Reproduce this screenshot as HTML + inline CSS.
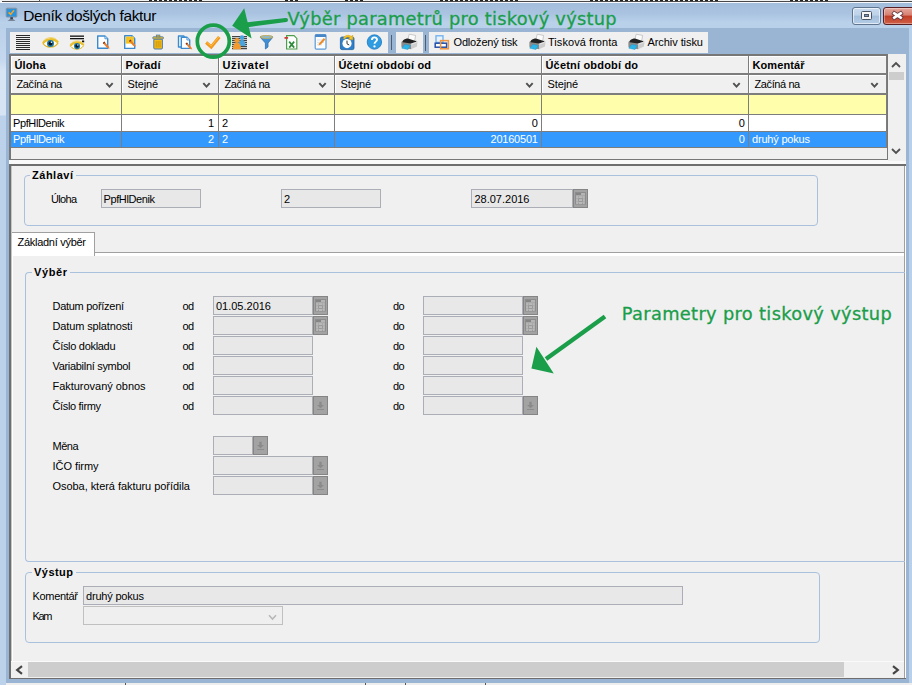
<!DOCTYPE html>
<html lang="cs">
<head>
<meta charset="utf-8">
<title>Deník došlých faktur</title>
<style>
*{box-sizing:border-box;margin:0;padding:0}
html,body{width:912px;height:685px;overflow:hidden;background:#b9d1ea}
body{position:relative;font-family:"Liberation Sans","DejaVu Sans",sans-serif;font-size:11px;color:#000}
#win,#win div,#win svg{position:absolute}
#win{left:0;top:0;width:912px;height:685px;overflow:hidden}
.t{white-space:nowrap;line-height:13px;height:13px;letter-spacing:-0.22px}
.b{font-weight:bold;letter-spacing:0.22px}
.w{color:#fff}
.fld{background:#e8e8e8;border:1px solid #abaeb7;height:19px}
.btn{background:#a3a3a3;border:1px solid #858585;width:15px;height:19px}
.grp{border:1px solid #a9c1dc;border-radius:4px}
.gl{background:#f0f0f0;padding:0 2px;font-weight:bold;letter-spacing:0.5px;white-space:nowrap;line-height:13px;height:13px}
.grn{-webkit-text-stroke:0.3px #1a9e4a;font-family:"DejaVu Sans","Liberation Sans",sans-serif;color:#1a9e4a;font-size:17.8px;line-height:22px;letter-spacing:0.18px;white-space:nowrap}
.hc{background:#f0f0f0;border-left:1px solid #fff;border-top:1px solid #fff}
.vl{background:#7d7d7d;width:1px}
.hl{background:#7d7d7d;height:1px}
</style>
</head>
<body>
<div id="win">

<div style="left:0;top:0;width:912px;height:3px;background:#f2f2f2"></div>
<div style="left:149px;top:0;width:55px;height:1px;background:repeating-linear-gradient(90deg,#222 0 3px,#f2f2f2 3px 5px)"></div>
<div style="left:285px;top:0;width:15px;height:1px;background:repeating-linear-gradient(90deg,#222 0 3px,#f2f2f2 3px 5px)"></div>
<div style="left:345px;top:0;width:20px;height:1px;background:repeating-linear-gradient(90deg,#222 0 3px,#f2f2f2 3px 5px)"></div>
<div style="left:440px;top:0;width:80px;height:1px;background:repeating-linear-gradient(90deg,#222 0 3px,#f2f2f2 3px 5px)"></div>
<div style="left:590px;top:0;width:130px;height:1px;background:repeating-linear-gradient(90deg,#222 0 3px,#f2f2f2 3px 5px)"></div>
<div style="left:790px;top:0;width:40px;height:1px;background:repeating-linear-gradient(90deg,#222 0 3px,#f2f2f2 3px 5px)"></div>
<div style="left:2px;top:1.3px;width:910px;height:1px;background:#4a4a4a"></div>
<div style="left:1px;top:2.3px;width:911px;height:1px;background:#f6f8fb"></div>
<div style="left:39px;top:0;width:1px;height:2px;background:#555"></div>
<div style="left:0;top:3px;width:912px;height:26px;background:linear-gradient(#a3bedc 0,#a9c3e0 40%,#bad1ea 75%,#b9d0ea)"></div>
<div style="left:0;top:29px;width:6px;height:656px;background:linear-gradient(#bcd2ea 0,#c4d7ee 30px,#d6e4f4 42px,#d6e4f4 86px,#bcd2ea 87px,#bcd2ea)"></div>
<div style="left:909px;top:29px;width:3px;height:656px;background:#b9d0ea"></div>
<div class="t" style="left:23.3px;top:7.4px;font-size:15.5px;line-height:18px;height:18px;letter-spacing:-0.39px">Deník došlých faktur</div>
<svg style="left:5px;top:7px" width="14" height="16" viewBox="0 0 14 16"><rect x="1.2" y="1.2" width="10.6" height="8.8" rx="0.8" fill="#2a93dd" stroke="#8a93a0" stroke-width="1"/><path d="M3.6 5.4 L5.6 7.4 L9 3.2" fill="none" stroke="#f6a623" stroke-width="1.5"/><rect x="5.3" y="10.2" width="2.6" height="2" fill="#3a3f4a"/><path d="M2.6 13.6 C4 12 9 12 10.6 13.6 Z" fill="#3a3f4a"/></svg>
<div style="left:852px;top:7px;width:29px;height:18px;border:1px solid #5f7590;border-radius:3px;background:linear-gradient(#c9dbee,#bdd2e9 45%,#a3bfdc 50%,#b4cce6);box-shadow:inset 0 0 0 1px rgba(255,255,255,.6)"></div>
<div style="left:861px;top:11px;width:11px;height:9px;border:1px solid #4a5568;border-radius:1.5px;background:#f4f4f4"></div>
<div style="left:864px;top:14px;width:5px;height:3px;border:1px solid #4a5568;background:#7f97b8"></div>
<div style="left:883px;top:7px;width:40px;height:18px;border:1px solid #5a1f22;border-radius:3px;background:linear-gradient(#e5aa9f,#d67e6f 45%,#c03c26 50%,#cf6048);box-shadow:inset 0 0 0 1px rgba(255,255,255,.35)"></div>
<svg style="left:890px;top:9px" width="15" height="13" viewBox="0 0 15 13"><path d="M2.6 3.2 L12.4 9.8 M12.4 3.2 L2.6 9.8" stroke="#5a3038" stroke-width="4.4"/><path d="M3.2 3.6 L11.8 9.4 M11.8 3.6 L3.2 9.4" stroke="#fff" stroke-width="2.7"/></svg>
<div style="left:6px;top:28px;width:903px;height:655px;background:#9ab5d3"></div>
<div style="left:6px;top:683px;width:906px;height:2px;background:#eeeeee"></div>
<div style="left:125px;top:683px;width:1px;height:2px;background:#555"></div>
<div style="left:365px;top:683px;width:1px;height:2px;background:#555"></div>
<div style="left:405px;top:683px;width:1px;height:2px;background:#555"></div>
<div style="left:485px;top:683px;width:1px;height:2px;background:#555"></div>
<div style="left:10px;top:32px;width:378px;height:21px;background:#f0f0f0"></div>
<div style="left:396px;top:32px;width:27px;height:21px;background:#f0f0f0"></div>
<div style="left:429px;top:32px;width:279px;height:21px;background:#f0f0f0"></div>
<div style="left:390.6px;top:35px;width:1.2px;height:15px;background:#4f5d70"></div>
<div style="left:425.2px;top:34.5px;width:1.2px;height:16px;background:#4f5d70"></div>
<svg style="left:16px;top:35px" width="15" height="16" viewBox="0 0 15 16"><rect x="0" y="0" width="14" height="1" fill="#2b2b2b"/><rect x="0" y="2" width="14" height="1" fill="#2b2b2b"/><rect x="0" y="4" width="14" height="1" fill="#2b2b2b"/><rect x="0" y="6" width="14" height="1" fill="#2b2b2b"/><rect x="0" y="8" width="14" height="1" fill="#2b2b2b"/><rect x="0" y="10" width="14" height="1" fill="#2b2b2b"/><rect x="0" y="12" width="14" height="1" fill="#2b2b2b"/><rect x="0" y="14" width="14" height="1" fill="#2b2b2b"/></svg>
<svg style="left:42px;top:36px" width="17" height="13" viewBox="0 0 17 13"><g transform="translate(0.5,1.5)"><path d="M0.6 6.2 C3.2 2 11.8 1 15.4 5.6 C12.4 10.6 4.2 11 0.6 6.2 Z" fill="#fdfbf0" stroke="#e2b21c" stroke-width="1.1"/><path d="M0.4 5.6 C3 1 11.6 0 15.6 4.8" fill="none" stroke="#eabf2c" stroke-width="2.1"/><path d="M1 3.4 C4 -0.6 10.6 -1 14 2" fill="none" stroke="#efd065" stroke-width="0.9"/><circle cx="8" cy="6" r="3.5" fill="#1f78a4"/><circle cx="8" cy="5.9" r="2" fill="#0a1420"/><circle cx="8.9" cy="4.8" r="0.75" fill="#fff"/></g></svg>
<svg style="left:69px;top:34px" width="17" height="17" viewBox="0 0 17 17"><rect x="1" y="1.5" width="14" height="1.3" fill="#111"/><rect x="1" y="4" width="14" height="1.3" fill="#111"/><rect x="13" y="6.5" width="2.2" height="1.8" fill="#111"/><g transform="translate(1,6.8) scale(0.88)"><path d="M0.6 6.2 C3.2 2 11.8 1 15.4 5.6 C12.4 10.6 4.2 11 0.6 6.2 Z" fill="#fdfbf0" stroke="#e2b21c" stroke-width="1.1"/><path d="M0.4 5.6 C3 1 11.6 0 15.6 4.8" fill="none" stroke="#eabf2c" stroke-width="2.1"/><path d="M1 3.4 C4 -0.6 10.6 -1 14 2" fill="none" stroke="#efd065" stroke-width="0.9"/><circle cx="8" cy="6" r="3.5" fill="#1f78a4"/><circle cx="8" cy="5.9" r="2" fill="#0a1420"/><circle cx="8.9" cy="4.8" r="0.75" fill="#fff"/></g></svg>
<svg style="left:96px;top:34px" width="16" height="17" viewBox="0 0 16 17"><path d="M1.7 2 h7.2 l2.8 2.8 v9.5 h-10 z" fill="#fff" stroke="#3b8ad0" stroke-width="1.4" stroke-linejoin="round"/><path d="M8.899999999999999 2 v2.8 h2.8" fill="#cfe3f6" stroke="#3b8ad0" stroke-width="0.8"/><path d="M8.3 7.5 l4.4 5 l0.9 2.2 l-2.4 -0.8 l-4.4 -5 z" fill="#ec7d2a"/><path d="M8.3 7.5 l0.9 1 l-1.5 1.4 l-0.9 -1 z" fill="#7a3b1e"/></svg>
<svg style="left:123px;top:34px" width="16" height="17" viewBox="0 0 16 17"><path d="M1.7 1.8 h7.2 l2.8 2.8 v9.8 h-10 z" fill="#fff" stroke="#3b8ad0" stroke-width="1.4" stroke-linejoin="round"/><path d="M8.899999999999999 1.8 v2.8 h2.8" fill="#cfe3f6" stroke="#3b8ad0" stroke-width="0.8"/><rect x="2.6" y="2.6" width="8.2" height="7" fill="#f6c324"/><path d="M7.5 5.5 l4.4 5 l0.9 2.2 l-2.4 -0.8 l-4.4 -5 z" fill="#ec7d2a"/><path d="M7.5 5.5 l0.9 1 l-1.5 1.4 l-0.9 -1 z" fill="#7a3b1e"/></svg>
<svg style="left:152px;top:34px" width="13" height="17" viewBox="0 0 13 17"><rect x="1.8" y="5" width="8.6" height="10" rx="1" fill="#f3bb14" stroke="#4b7cb0" stroke-width="1"/><rect x="0.8" y="2.8" width="10.6" height="2.2" rx="0.8" fill="#f3bb14" stroke="#4b7cb0" stroke-width="0.9"/><rect x="4.3" y="1" width="3.6" height="2" fill="#e0a90f" stroke="#4b7cb0" stroke-width="0.7"/><path d="M4.2 7 v6.4 M6.1 7 v6.4 M8 7 v6.4" stroke="#c99208" stroke-width="0.9"/></svg>
<svg style="left:177px;top:34px" width="17" height="17" viewBox="0 0 17 17"><path d="M1.5 2 h5.2 l2.8 2.8 v8.2 h-8 z" fill="#fff" stroke="#3b8ad0" stroke-width="1.4" stroke-linejoin="round"/><path d="M6.7 2 v2.8 h2.8" fill="#cfe3f6" stroke="#3b8ad0" stroke-width="0.8"/><path d="M4.3 3.2 h5.6000000000000005 l2.8 2.8 v8.399999999999999 h-8.4 z" fill="#fff" stroke="#3b8ad0" stroke-width="1.4" stroke-linejoin="round"/><path d="M9.899999999999999 3.2 v2.8 h2.8" fill="#cfe3f6" stroke="#3b8ad0" stroke-width="0.8"/><path d="M10 8.4 l4.4 5 l0.9 2.2 l-2.4 -0.8 l-4.4 -5 z" fill="#ec7d2a"/><path d="M10 8.4 l0.9 1 l-1.5 1.4 l-0.9 -1 z" fill="#7a3b1e"/></svg>
<svg style="left:204px;top:34px" width="18" height="16" viewBox="0 0 18 16"><path d="M2.2 8.6 L7.2 13 L15.3 3" fill="none" stroke="#f2981c" stroke-width="3.3" stroke-linejoin="miter"/><path d="M2.6 8.2 L7.2 12.2 L14.8 3" fill="none" stroke="#fbbf45" stroke-width="1" /></svg>
<svg style="left:231px;top:34px" width="17" height="17" viewBox="0 0 17 17"><rect x="1" y="2.2" width="15" height="1" fill="#1a1a1a"/><rect x="1" y="4.2" width="15" height="1" fill="#1a1a1a"/><rect x="1" y="6.2" width="15" height="1" fill="#1a1a1a"/><rect x="1" y="8.2" width="15" height="1" fill="#1a1a1a"/><rect x="1" y="10.2" width="15" height="1" fill="#1a1a1a"/><rect x="1" y="12.2" width="15" height="1" fill="#1a1a1a"/><rect x="1" y="14.2" width="15" height="1" fill="#1a1a1a"/><circle cx="11" cy="3.6" r="2.4" fill="#49a3dc"/><path d="M7.6 12 C7.6 7 9 6 11 6 C13 6 14.4 7 14.4 12 Z" fill="#49a3dc"/><circle cx="6" cy="6.6" r="2.5" fill="#f39a2e"/><path d="M2 15.2 C2 10 3.6 9 6 9 C8.4 9 10 10 10 15.2 Z" fill="#f39a2e"/></svg>
<svg style="left:259px;top:34px" width="16" height="17" viewBox="0 0 16 17"><path d="M1 3 C1 1.5 14 1.5 14 3 L9 9 L9 13 L6.4 15 L6.4 9 Z" fill="#3f8fd6" stroke="#2f6fb0" stroke-width="0.8"/><ellipse cx="7.5" cy="3" rx="6.3" ry="1.3" fill="#7db9ea" stroke="#d9b23a" stroke-width="0.9"/></svg>
<svg style="left:284px;top:34px" width="15" height="17" viewBox="0 0 15 17"><path d="M2.6 1.6 h7.4 l2.8 2.8 v10.6 h-10.2 z" fill="#fff" stroke="#4f9d4b" stroke-width="1.2"/><path d="M5.2 7.6 l5 6 M10.2 7.6 l-5 6" stroke="#2f8a3a" stroke-width="1.7"/><rect x="0.5" y="3" width="3.6" height="1.8" fill="#d23b3b"/></svg>
<svg style="left:314px;top:33px" width="14" height="18" viewBox="0 0 14 18"><rect x="1.2" y="1.6" width="10.8" height="14.6" rx="1.2" fill="#fdfdfd" stroke="#5a9ad8" stroke-width="1.2"/><rect x="1.2" y="1.6" width="10.8" height="2.4" fill="#4a86c5"/><path d="M3 7 h7 M3 9.4 h7 M3 11.8 h5" stroke="#cfd8e4" stroke-width="0.8"/><path d="M9.8 5 l1.6 1.4 l-4.6 5.2 l-2.2 0.8 l0.6 -2.2 z" fill="#f08a24"/></svg>
<svg style="left:339px;top:33px" width="17" height="18" viewBox="0 0 17 18"><rect x="1.4" y="4" width="13.6" height="12.6" rx="1.6" fill="#2e7fc9" stroke="#1f5fa0" stroke-width="0.8"/><circle cx="8" cy="10.6" r="4.6" fill="#fff"/><path d="M8 7.6 v3.2 l2.2 1.2" stroke="#333" stroke-width="1" fill="none"/><path d="M4.2 5.4 C6 1.8 10 1.4 12.4 3.6 L13.6 2 L14 6.8 L9.4 6.2 L11 4.8 C9 3.4 6.8 4 5.8 6 Z" fill="#f7c325" stroke="#d79a10" stroke-width="0.5"/></svg>
<svg style="left:366px;top:34px" width="17" height="17" viewBox="0 0 17 17"><circle cx="8.4" cy="8" r="7.2" fill="#2f9be0"/><circle cx="8.4" cy="8" r="7.2" fill="none" stroke="#1c77c0" stroke-width="0.8"/><path d="M5.9 6.1 C5.9 2.6 11 2.6 11 5.7 C11 7.6 8.5 7.7 8.5 9.8" fill="none" stroke="#fff" stroke-width="1.9"/><circle cx="8.5" cy="12.4" r="1.15" fill="#fff"/></svg>
<svg style="left:400px;top:33px" width="18" height="18" viewBox="0 0 18 18"><path d="M9.2 1.2 L15.6 2.4 L14.6 8.4 L7.8 6.8 Z" fill="#fbfbfb" stroke="#b5b5b5" stroke-width="0.7"/><path d="M10.6 9 L16.4 7.6 C17.2 7.6 17.4 8.4 17.4 9.2 L17 13.4 L11 16.2 Z" fill="#cdcdcd"/><path d="M1.4 9.8 C1.4 8.8 2 8 3 7.8 L10.6 8.8 L11.2 16.2 L2.2 14.8 C1.6 14.6 1.4 14 1.4 13.4 Z" fill="#8b8b8b"/><path d="M3 7.6 C4.4 6.2 6.4 5.6 8 5.6 L14.8 7.8 C15.6 8 16 8.2 16.4 8.8 L10.8 10.4 L2.6 9.2 Z" fill="#222"/><path d="M4.6 11.4 L10.4 12.4 L8 16.6 L1.8 15.2 Z" fill="#2bb5e8" stroke="#1b8fc0" stroke-width="0.4"/><path d="M11.6 11 L16.6 9.4" stroke="#eee" stroke-width="0.8"/></svg>
<svg style="left:528px;top:33px" width="18" height="18" viewBox="0 0 18 18"><path d="M9.2 1.2 L15.6 2.4 L14.6 8.4 L7.8 6.8 Z" fill="#fbfbfb" stroke="#b5b5b5" stroke-width="0.7"/><path d="M10.6 9 L16.4 7.6 C17.2 7.6 17.4 8.4 17.4 9.2 L17 13.4 L11 16.2 Z" fill="#cdcdcd"/><path d="M1.4 9.8 C1.4 8.8 2 8 3 7.8 L10.6 8.8 L11.2 16.2 L2.2 14.8 C1.6 14.6 1.4 14 1.4 13.4 Z" fill="#8b8b8b"/><path d="M3 7.6 C4.4 6.2 6.4 5.6 8 5.6 L14.8 7.8 C15.6 8 16 8.2 16.4 8.8 L10.8 10.4 L2.6 9.2 Z" fill="#222"/><path d="M4.6 11.4 L10.4 12.4 L8 16.6 L1.8 15.2 Z" fill="#2bb5e8" stroke="#1b8fc0" stroke-width="0.4"/><path d="M11.6 11 L16.6 9.4" stroke="#eee" stroke-width="0.8"/></svg>
<svg style="left:627px;top:33px" width="18" height="18" viewBox="0 0 18 18"><path d="M9.2 1.2 L15.6 2.4 L14.6 8.4 L7.8 6.8 Z" fill="#fbfbfb" stroke="#b5b5b5" stroke-width="0.7"/><path d="M10.6 9 L16.4 7.6 C17.2 7.6 17.4 8.4 17.4 9.2 L17 13.4 L11 16.2 Z" fill="#cdcdcd"/><path d="M1.4 9.8 C1.4 8.8 2 8 3 7.8 L10.6 8.8 L11.2 16.2 L2.2 14.8 C1.6 14.6 1.4 14 1.4 13.4 Z" fill="#8b8b8b"/><path d="M3 7.6 C4.4 6.2 6.4 5.6 8 5.6 L14.8 7.8 C15.6 8 16 8.2 16.4 8.8 L10.8 10.4 L2.6 9.2 Z" fill="#222"/><path d="M4.6 11.4 L10.4 12.4 L8 16.6 L1.8 15.2 Z" fill="#2bb5e8" stroke="#1b8fc0" stroke-width="0.4"/><path d="M11.6 11 L16.6 9.4" stroke="#eee" stroke-width="0.8"/></svg>
<svg style="left:433px;top:33px" width="17" height="18" viewBox="0 0 17 18"><rect x="3" y="2.8" width="7" height="6.6" fill="#eaf3fc" stroke="#6cb0ee" stroke-width="1.3"/><rect x="2.2" y="10.2" width="11.4" height="4" fill="#fff" stroke="#2350ad" stroke-width="1.5"/><rect x="7.6" y="7.6" width="7.8" height="8.2" fill="none" stroke="#f0953f" stroke-width="1.5"/></svg>
<div class="t " style="left:453.5px;top:36px;letter-spacing:-0.17px;">Odložený tisk</div>
<div class="t " style="left:548px;top:36px;letter-spacing:0.06px;">Tisková fronta</div>
<div class="t " style="left:647.5px;top:36px;letter-spacing:-0.07px;">Archiv tisku</div>
<div style="left:9px;top:160px;width:897px;height:5px;background:#f9f9f9"></div>
<div style="left:9px;top:54px;width:879px;height:106px;background:#f0f0f0;border:1px solid #777;border-top-width:2px;border-left-width:2px"></div>
<div class="hc" style="left:11px;top:56px;width:110px;height:17px"></div>
<div class="hc" style="left:11px;top:75px;width:110px;height:18px"></div>
<div style="left:11px;top:95px;width:110px;height:19px;background:#ffffab"></div>
<div style="left:11px;top:115px;width:110px;height:16px;background:#fff"></div>
<div style="left:11px;top:132px;width:110px;height:15px;background:#3399ff"></div>
<div class="vl" style="left:121px;top:56px;height:92px"></div>
<div class="t b" style="left:14.5px;top:59px;letter-spacing:0.11px;">Úloha</div>
<div class="t " style="left:16.5px;top:78px;letter-spacing:-0.40px;">Začíná na</div>
<svg style="left:105px;top:82.4px" width="9" height="7" viewBox="0 0 9 7"><path d="M1.3 1.2 L4.5 4.7 L7.7 1.2" fill="none" stroke="#505050" stroke-width="1.9"/></svg>
<div class="hc" style="left:122px;top:56px;width:96px;height:17px"></div>
<div class="hc" style="left:122px;top:75px;width:96px;height:18px"></div>
<div style="left:122px;top:95px;width:96px;height:19px;background:#ffffab"></div>
<div style="left:122px;top:115px;width:96px;height:16px;background:#fff"></div>
<div style="left:122px;top:132px;width:96px;height:15px;background:#3399ff"></div>
<div class="vl" style="left:218px;top:56px;height:92px"></div>
<div class="t b" style="left:125.5px;top:59px;letter-spacing:0.15px;">Pořadí</div>
<div class="t " style="left:127.5px;top:78px;letter-spacing:-0.09px;">Stejné</div>
<svg style="left:202px;top:82.4px" width="9" height="7" viewBox="0 0 9 7"><path d="M1.3 1.2 L4.5 4.7 L7.7 1.2" fill="none" stroke="#505050" stroke-width="1.9"/></svg>
<div class="hc" style="left:219px;top:56px;width:115px;height:17px"></div>
<div class="hc" style="left:219px;top:75px;width:115px;height:18px"></div>
<div style="left:219px;top:95px;width:115px;height:19px;background:#ffffab"></div>
<div style="left:219px;top:115px;width:115px;height:16px;background:#fff"></div>
<div style="left:219px;top:132px;width:115px;height:15px;background:#3399ff"></div>
<div class="vl" style="left:334px;top:56px;height:92px"></div>
<div class="t b" style="left:222.5px;top:59px;letter-spacing:0.63px;">Uživatel</div>
<div class="t " style="left:224.5px;top:78px;letter-spacing:-0.40px;">Začíná na</div>
<svg style="left:318px;top:82.4px" width="9" height="7" viewBox="0 0 9 7"><path d="M1.3 1.2 L4.5 4.7 L7.7 1.2" fill="none" stroke="#505050" stroke-width="1.9"/></svg>
<div class="hc" style="left:335px;top:56px;width:206px;height:17px"></div>
<div class="hc" style="left:335px;top:75px;width:206px;height:18px"></div>
<div style="left:335px;top:95px;width:206px;height:19px;background:#ffffab"></div>
<div style="left:335px;top:115px;width:206px;height:16px;background:#fff"></div>
<div style="left:335px;top:132px;width:206px;height:15px;background:#3399ff"></div>
<div class="vl" style="left:541px;top:56px;height:92px"></div>
<div class="t b" style="left:338.5px;top:59px;letter-spacing:0.18px;">Účetní období od</div>
<div class="t " style="left:340.5px;top:78px;letter-spacing:-0.09px;">Stejné</div>
<svg style="left:525px;top:82.4px" width="9" height="7" viewBox="0 0 9 7"><path d="M1.3 1.2 L4.5 4.7 L7.7 1.2" fill="none" stroke="#505050" stroke-width="1.9"/></svg>
<div class="hc" style="left:542px;top:56px;width:206px;height:17px"></div>
<div class="hc" style="left:542px;top:75px;width:206px;height:18px"></div>
<div style="left:542px;top:95px;width:206px;height:19px;background:#ffffab"></div>
<div style="left:542px;top:115px;width:206px;height:16px;background:#fff"></div>
<div style="left:542px;top:132px;width:206px;height:15px;background:#3399ff"></div>
<div class="vl" style="left:748px;top:56px;height:92px"></div>
<div class="t b" style="left:545.5px;top:59px;letter-spacing:0.18px;">Účetní období do</div>
<div class="t " style="left:547.5px;top:78px;letter-spacing:-0.09px;">Stejné</div>
<svg style="left:732px;top:82.4px" width="9" height="7" viewBox="0 0 9 7"><path d="M1.3 1.2 L4.5 4.7 L7.7 1.2" fill="none" stroke="#505050" stroke-width="1.9"/></svg>
<div class="hc" style="left:749px;top:56px;width:137px;height:17px"></div>
<div class="hc" style="left:749px;top:75px;width:137px;height:18px"></div>
<div style="left:749px;top:95px;width:137px;height:19px;background:#ffffab"></div>
<div style="left:749px;top:115px;width:137px;height:16px;background:#fff"></div>
<div style="left:749px;top:132px;width:137px;height:15px;background:#3399ff"></div>
<div class="vl" style="left:886px;top:56px;height:92px"></div>
<div class="t b" style="left:752.5px;top:59px;letter-spacing:0.09px;">Komentář</div>
<div class="t " style="left:754.5px;top:78px;letter-spacing:-0.40px;">Začíná na</div>
<svg style="left:870px;top:82.4px" width="9" height="7" viewBox="0 0 9 7"><path d="M1.3 1.2 L4.5 4.7 L7.7 1.2" fill="none" stroke="#505050" stroke-width="1.9"/></svg>
<div class="hl" style="left:11px;top:73.4px;width:876px;height:1.7px"></div>
<div class="hl" style="left:11px;top:93.3px;width:876px;height:1.7px"></div>
<div class="hl" style="left:11px;top:114px;width:876px;height:1px"></div>
<div class="hl" style="left:11px;top:131px;width:876px;height:1px"></div>
<div class="hl" style="left:11px;top:147px;width:876px;height:1px"></div>
<div class="t " style="left:13px;top:117px;letter-spacing:-0.39px;">PpfHlDenik</div>
<div class="t w" style="left:13px;top:133px;letter-spacing:-0.39px;">PpfHlDenik</div>
<div class="t " style="left:122px;top:117px;width:92px;text-align:right">1</div>
<div class="t w" style="left:122px;top:133px;width:92px;text-align:right">2</div>
<div class="t " style="left:222px;top:117px;">2</div>
<div class="t w" style="left:222px;top:133px;">2</div>
<div class="t " style="left:335px;top:117px;width:202.7px;text-align:right">0</div>
<div class="t w" style="left:335px;top:133px;width:202.7px;text-align:right">20160501</div>
<div class="t " style="left:542px;top:117px;width:202.7px;text-align:right">0</div>
<div class="t w" style="left:542px;top:133px;width:202.7px;text-align:right">0</div>
<div class="t w" style="left:752px;top:133px;letter-spacing:-0.19px;">druhý pokus</div>
<div style="left:888px;top:54px;width:18px;height:107px;background:#f0f0f0"></div>
<div style="left:889px;top:72px;width:15px;height:8px;background:#cdcdcd"></div>
<svg style="left:891px;top:61px" width="10" height="7" viewBox="0 0 10 7"><path d="M1 6 L5 2 L9 6" fill="none" stroke="#505050" stroke-width="1.8"/></svg>
<svg style="left:891px;top:148px" width="10" height="7" viewBox="0 0 10 7"><path d="M1 1 L5 5 L9 1" fill="none" stroke="#505050" stroke-width="1.8"/></svg>
<div style="left:9px;top:164px;width:897px;height:515px;background:#f0f0f0;border:1px solid #6e6e6e;border-top-width:2px;border-left-width:2px;border-right:none"></div>
<div class="grp" style="left:24px;top:175px;width:794px;height:51px"></div>
<div class="gl" style="left:30px;top:169px;letter-spacing:0.52px">Záhlaví</div>
<div class="t " style="left:51px;top:193px;letter-spacing:-0.68px;">Úloha</div>
<div class="fld" style="left:101px;top:189px;width:100px"></div>
<div class="t " style="left:103.5px;top:193px;letter-spacing:-0.39px;">PpfHlDenik</div>
<div class="fld" style="left:281px;top:189px;width:100px"></div>
<div class="t " style="left:284px;top:193px;">2</div>
<div class="fld" style="left:471px;top:189px;width:102px"></div>
<div class="t " style="left:474.5px;top:193px;letter-spacing:-0.01px;">28.07.2016</div>
<div class="btn" style="left:573px;top:189px"><svg style="left:1px;top:2px" width="11" height="13" viewBox="0 0 11 13"><rect x="0.5" y="0.5" width="10" height="11.5" fill="#a9a9a9" stroke="#8d8d8d" stroke-width="1"/><rect x="1" y="1" width="5" height="2" fill="#858585"/><rect x="6" y="1" width="4" height="2" fill="#b4b4b4"/><rect x="1.2" y="4.2" width="1.8" height="2" fill="#b9b9b9"/><rect x="4" y="4.2" width="3" height="2" fill="#b9b9b9"/><rect x="8" y="4.2" width="1.6" height="2" fill="#b9b9b9"/><rect x="1.2" y="7.2" width="1.8" height="2" fill="#b9b9b9"/><rect x="4" y="7.2" width="3" height="2" fill="#b9b9b9"/><rect x="8" y="7.2" width="1.6" height="2" fill="#b9b9b9"/><rect x="1.2" y="10" width="1.8" height="2" fill="#b9b9b9"/><rect x="4" y="10" width="3" height="2" fill="#b9b9b9"/><rect x="8" y="10" width="1.6" height="2" fill="#b9b9b9"/><rect x="3.7" y="6.7" width="3.6" height="2.9" fill="none" stroke="#8f8f8f" stroke-width="0.6"/></svg></div>
<div style="left:12px;top:252px;width:893px;height:1px;background:#a0a0a0"></div>
<div style="left:12px;top:253px;width:893px;height:3px;background:#fff"></div>
<div style="left:12px;top:232px;width:83px;height:24px;background:#fff;border-top:1px solid #a0a0a0;border-right:1px solid #a0a0a0"></div>
<div class="t " style="left:17.5px;top:236px;letter-spacing:-0.28px;">Základní výběr</div>
<div style="left:11px;top:166px;width:1px;height:512px;background:#c6c6c6"></div>
<div style="left:12px;top:256px;width:1px;height:405px;background:#fff"></div>
<div style="left:904px;top:166px;width:1px;height:512px;background:#a0a0a0"></div>
<div style="left:905px;top:166px;width:1px;height:512px;background:#fff"></div>
<div class="grp" style="left:25px;top:272px;width:880px;height:290px;border-right:none;border-radius:4px 0 0 4px"></div>
<div class="gl" style="left:32px;top:266px;letter-spacing:0.61px">Výběr</div>
<div class="t " style="left:52.5px;top:300px;letter-spacing:-0.28px;">Datum pořízení</div>
<div class="t " style="left:182.5px;top:300px;letter-spacing:-0.73px;">od</div>
<div class="t " style="left:393px;top:300px;letter-spacing:-0.63px;">do</div>
<div class="fld" style="left:213px;top:296px;width:100px"></div>
<div class="btn" style="left:313px;top:296px"><svg style="left:1px;top:2px" width="11" height="13" viewBox="0 0 11 13"><rect x="0.5" y="0.5" width="10" height="11.5" fill="#a9a9a9" stroke="#8d8d8d" stroke-width="1"/><rect x="1" y="1" width="5" height="2" fill="#858585"/><rect x="6" y="1" width="4" height="2" fill="#b4b4b4"/><rect x="1.2" y="4.2" width="1.8" height="2" fill="#b9b9b9"/><rect x="4" y="4.2" width="3" height="2" fill="#b9b9b9"/><rect x="8" y="4.2" width="1.6" height="2" fill="#b9b9b9"/><rect x="1.2" y="7.2" width="1.8" height="2" fill="#b9b9b9"/><rect x="4" y="7.2" width="3" height="2" fill="#b9b9b9"/><rect x="8" y="7.2" width="1.6" height="2" fill="#b9b9b9"/><rect x="1.2" y="10" width="1.8" height="2" fill="#b9b9b9"/><rect x="4" y="10" width="3" height="2" fill="#b9b9b9"/><rect x="8" y="10" width="1.6" height="2" fill="#b9b9b9"/><rect x="3.7" y="6.7" width="3.6" height="2.9" fill="none" stroke="#8f8f8f" stroke-width="0.6"/></svg></div>
<div class="fld" style="left:423px;top:296px;width:100px"></div>
<div class="btn" style="left:523px;top:296px"><svg style="left:1px;top:2px" width="11" height="13" viewBox="0 0 11 13"><rect x="0.5" y="0.5" width="10" height="11.5" fill="#a9a9a9" stroke="#8d8d8d" stroke-width="1"/><rect x="1" y="1" width="5" height="2" fill="#858585"/><rect x="6" y="1" width="4" height="2" fill="#b4b4b4"/><rect x="1.2" y="4.2" width="1.8" height="2" fill="#b9b9b9"/><rect x="4" y="4.2" width="3" height="2" fill="#b9b9b9"/><rect x="8" y="4.2" width="1.6" height="2" fill="#b9b9b9"/><rect x="1.2" y="7.2" width="1.8" height="2" fill="#b9b9b9"/><rect x="4" y="7.2" width="3" height="2" fill="#b9b9b9"/><rect x="8" y="7.2" width="1.6" height="2" fill="#b9b9b9"/><rect x="1.2" y="10" width="1.8" height="2" fill="#b9b9b9"/><rect x="4" y="10" width="3" height="2" fill="#b9b9b9"/><rect x="8" y="10" width="1.6" height="2" fill="#b9b9b9"/><rect x="3.7" y="6.7" width="3.6" height="2.9" fill="none" stroke="#8f8f8f" stroke-width="0.6"/></svg></div>
<div class="t " style="left:52.5px;top:320px;letter-spacing:-0.13px;">Datum splatnosti</div>
<div class="t " style="left:182.5px;top:320px;letter-spacing:-0.73px;">od</div>
<div class="t " style="left:393px;top:320px;letter-spacing:-0.63px;">do</div>
<div class="fld" style="left:213px;top:316px;width:100px"></div>
<div class="btn" style="left:313px;top:316px"><svg style="left:1px;top:2px" width="11" height="13" viewBox="0 0 11 13"><rect x="0.5" y="0.5" width="10" height="11.5" fill="#a9a9a9" stroke="#8d8d8d" stroke-width="1"/><rect x="1" y="1" width="5" height="2" fill="#858585"/><rect x="6" y="1" width="4" height="2" fill="#b4b4b4"/><rect x="1.2" y="4.2" width="1.8" height="2" fill="#b9b9b9"/><rect x="4" y="4.2" width="3" height="2" fill="#b9b9b9"/><rect x="8" y="4.2" width="1.6" height="2" fill="#b9b9b9"/><rect x="1.2" y="7.2" width="1.8" height="2" fill="#b9b9b9"/><rect x="4" y="7.2" width="3" height="2" fill="#b9b9b9"/><rect x="8" y="7.2" width="1.6" height="2" fill="#b9b9b9"/><rect x="1.2" y="10" width="1.8" height="2" fill="#b9b9b9"/><rect x="4" y="10" width="3" height="2" fill="#b9b9b9"/><rect x="8" y="10" width="1.6" height="2" fill="#b9b9b9"/><rect x="3.7" y="6.7" width="3.6" height="2.9" fill="none" stroke="#8f8f8f" stroke-width="0.6"/></svg></div>
<div class="fld" style="left:423px;top:316px;width:100px"></div>
<div class="btn" style="left:523px;top:316px"><svg style="left:1px;top:2px" width="11" height="13" viewBox="0 0 11 13"><rect x="0.5" y="0.5" width="10" height="11.5" fill="#a9a9a9" stroke="#8d8d8d" stroke-width="1"/><rect x="1" y="1" width="5" height="2" fill="#858585"/><rect x="6" y="1" width="4" height="2" fill="#b4b4b4"/><rect x="1.2" y="4.2" width="1.8" height="2" fill="#b9b9b9"/><rect x="4" y="4.2" width="3" height="2" fill="#b9b9b9"/><rect x="8" y="4.2" width="1.6" height="2" fill="#b9b9b9"/><rect x="1.2" y="7.2" width="1.8" height="2" fill="#b9b9b9"/><rect x="4" y="7.2" width="3" height="2" fill="#b9b9b9"/><rect x="8" y="7.2" width="1.6" height="2" fill="#b9b9b9"/><rect x="1.2" y="10" width="1.8" height="2" fill="#b9b9b9"/><rect x="4" y="10" width="3" height="2" fill="#b9b9b9"/><rect x="8" y="10" width="1.6" height="2" fill="#b9b9b9"/><rect x="3.7" y="6.7" width="3.6" height="2.9" fill="none" stroke="#8f8f8f" stroke-width="0.6"/></svg></div>
<div class="t " style="left:52.5px;top:340px;letter-spacing:-0.30px;">Číslo dokladu</div>
<div class="t " style="left:182.5px;top:340px;letter-spacing:-0.73px;">od</div>
<div class="t " style="left:393px;top:340px;letter-spacing:-0.63px;">do</div>
<div class="fld" style="left:213px;top:336px;width:100px"></div>
<div class="fld" style="left:423px;top:336px;width:100px"></div>
<div class="t " style="left:52.5px;top:360px;letter-spacing:-0.31px;">Variabilní symbol</div>
<div class="t " style="left:182.5px;top:360px;letter-spacing:-0.73px;">od</div>
<div class="t " style="left:393px;top:360px;letter-spacing:-0.63px;">do</div>
<div class="fld" style="left:213px;top:356px;width:100px"></div>
<div class="fld" style="left:423px;top:356px;width:100px"></div>
<div class="t " style="left:52.5px;top:380px;letter-spacing:-0.03px;">Fakturovaný obnos</div>
<div class="t " style="left:182.5px;top:380px;letter-spacing:-0.73px;">od</div>
<div class="t " style="left:393px;top:380px;letter-spacing:-0.63px;">do</div>
<div class="fld" style="left:213px;top:376px;width:100px"></div>
<div class="fld" style="left:423px;top:376px;width:100px"></div>
<div class="t " style="left:52.5px;top:400px;letter-spacing:-0.34px;">Číslo firmy</div>
<div class="t " style="left:182.5px;top:400px;letter-spacing:-0.73px;">od</div>
<div class="t " style="left:393px;top:400px;letter-spacing:-0.63px;">do</div>
<div class="fld" style="left:213px;top:396px;width:100px"></div>
<div class="btn" style="left:313px;top:396px"><svg style="left:2px;top:4px" width="9" height="10" viewBox="0 0 9 10"><path d="M3.3 0.8 H5.7 V4 H8 L4.5 7.2 L1 4 H3.3 Z" fill="#8a8a8a"/><rect x="1" y="8" width="7" height="1" fill="#8d8d8d"/></svg></div>
<div class="fld" style="left:423px;top:396px;width:100px"></div>
<div class="btn" style="left:523px;top:396px"><svg style="left:2px;top:4px" width="9" height="10" viewBox="0 0 9 10"><path d="M3.3 0.8 H5.7 V4 H8 L4.5 7.2 L1 4 H3.3 Z" fill="#8a8a8a"/><rect x="1" y="8" width="7" height="1" fill="#8d8d8d"/></svg></div>
<div class="t " style="left:216px;top:300px;letter-spacing:-0.01px;">01.05.2016</div>
<div class="t " style="left:52.5px;top:440px;letter-spacing:-0.50px;">Měna</div>
<div class="fld" style="left:213px;top:436px;width:40px"></div>
<div class="btn" style="left:253px;top:436px"><svg style="left:2px;top:4px" width="9" height="10" viewBox="0 0 9 10"><path d="M3.3 0.8 H5.7 V4 H8 L4.5 7.2 L1 4 H3.3 Z" fill="#8a8a8a"/><rect x="1" y="8" width="7" height="1" fill="#8d8d8d"/></svg></div>
<div class="t " style="left:52.5px;top:460px;letter-spacing:-0.05px;">IČO firmy</div>
<div class="fld" style="left:213px;top:456px;width:100px"></div>
<div class="btn" style="left:313px;top:456px"><svg style="left:2px;top:4px" width="9" height="10" viewBox="0 0 9 10"><path d="M3.3 0.8 H5.7 V4 H8 L4.5 7.2 L1 4 H3.3 Z" fill="#8a8a8a"/><rect x="1" y="8" width="7" height="1" fill="#8d8d8d"/></svg></div>
<div class="t " style="left:52.5px;top:480px;letter-spacing:-0.05px;">Osoba, která fakturu pořídila</div>
<div class="fld" style="left:213px;top:476px;width:100px"></div>
<div class="btn" style="left:313px;top:476px"><svg style="left:2px;top:4px" width="9" height="10" viewBox="0 0 9 10"><path d="M3.3 0.8 H5.7 V4 H8 L4.5 7.2 L1 4 H3.3 Z" fill="#8a8a8a"/><rect x="1" y="8" width="7" height="1" fill="#8d8d8d"/></svg></div>
<div class="grp" style="left:25px;top:572px;width:795px;height:71px"></div>
<div class="gl" style="left:32px;top:566px;letter-spacing:0.47px">Výstup</div>
<div class="t " style="left:32.5px;top:590px;letter-spacing:-0.31px;">Komentář</div>
<div class="t " style="left:32.5px;top:610px;letter-spacing:-1.31px;">Kam</div>
<div class="fld" style="left:83px;top:586px;width:600px"></div>
<div class="t " style="left:86px;top:590px;letter-spacing:-0.19px;">druhý pokus</div>
<div class="fld" style="left:83px;top:606px;width:200px;background:#efefef;border-color:#c0c0c0"></div>
<svg style="left:268px;top:614px" width="9" height="7" viewBox="0 0 9 7"><path d="M1 1.2 L4.5 5 L8 1.2" fill="none" stroke="#b8b8b8" stroke-width="1.6"/></svg>
<div style="left:11px;top:661px;width:893px;height:17px;background:#f0f0f0;border-top:1px solid #fafafa"></div>
<div style="left:28px;top:662px;width:816px;height:15px;background:#cdcdcd"></div>
<svg style="left:15px;top:664.5px" width="9" height="10" viewBox="0 0 9 10"><path d="M7 1.2 L2.2 5 L7 8.8" fill="none" stroke="#454545" stroke-width="2.2"/></svg>
<svg style="left:890.5px;top:664.5px" width="9" height="10" viewBox="0 0 9 10"><path d="M2 1.2 L6.8 5 L2 8.8" fill="none" stroke="#454545" stroke-width="2.2"/></svg>
<div class="grn" style="left:287.4px;top:8px;letter-spacing:0.27px">Výběr parametrů pro tiskový výstup</div>
<div class="grn" style="left:621.8px;top:303px;letter-spacing:0.34px">Parametry pro tiskový výstup</div>
<svg style="left:190px;top:0" width="110" height="65" viewBox="0 0 110 65"><circle cx="23.3" cy="41.2" r="16" fill="none" stroke="#1a9e4a" stroke-width="3.7"/><path d="M55.7 22.4 L95.7 17.9 L96.3 21.9 L56.3 27.4 Z" fill="#1a9e4a"/><circle cx="96" cy="19.9" r="2" fill="#1a9e4a"/><path d="M42.2 25.8 L54.2 8.2 L61.6 38.6 Z" fill="#1a9e4a"/></svg>
<svg style="left:520px;top:300px" width="100" height="80" viewBox="0 0 100 80"><path d="M85 16.5 L26 59" stroke="#1a9e4a" stroke-width="4.4" fill="none"/><path d="M11.4 68.4 L16.4 46.8 L33.8 73.6 Z" fill="#1a9e4a"/></svg>
</div>
</body>
</html>
